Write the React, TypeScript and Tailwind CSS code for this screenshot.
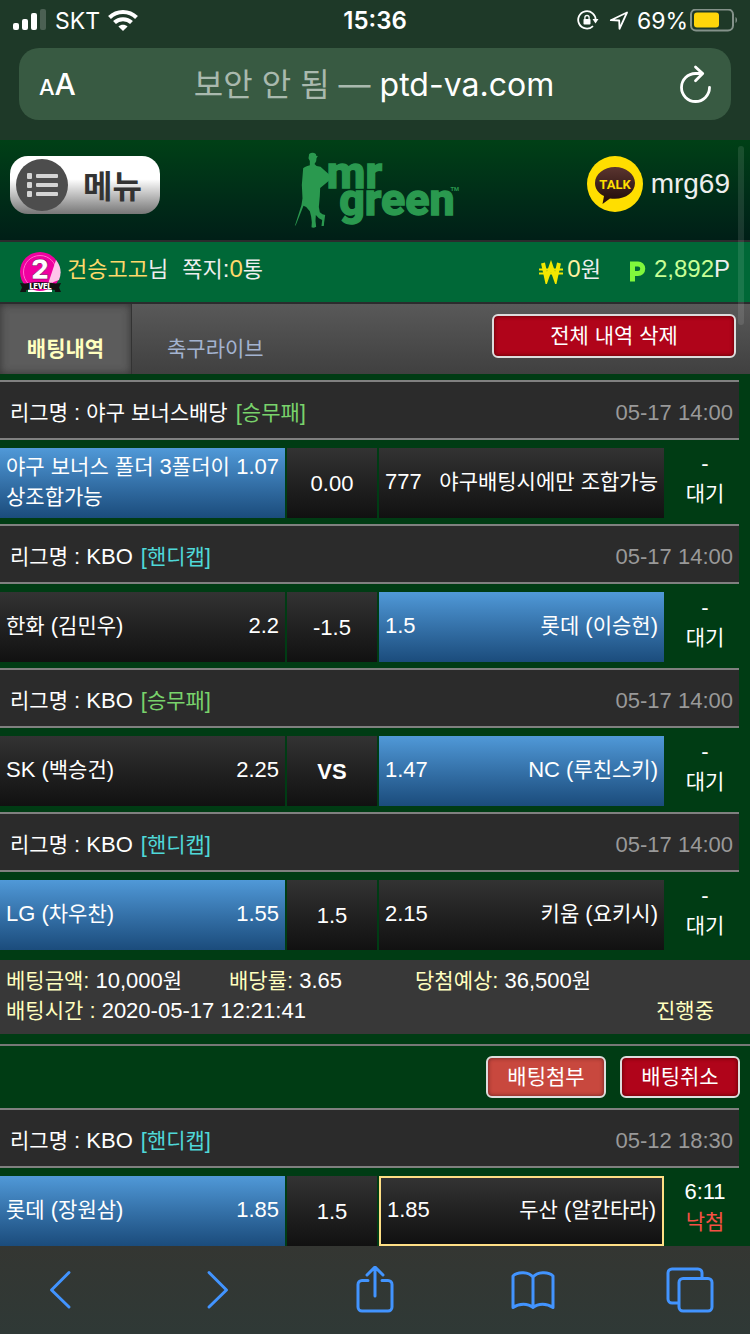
import React from 'react';

type Side = 'home' | 'away';

interface Match {
    league: string;
    kind: 'win' | 'handicap';
    date: string;
    home: string;
    homeOdds: string;
    line: string;
    away: string;
    awayOdds: string;
    pick: Side;
    winner?: Side;
    score: string;
    status: string;
    lost?: boolean;
}

const openMatches: Match[] = [
    { league: '야구 보너스배당', kind: 'win', date: '05-17 14:00', home: '야구 보너스 폴더 3폴더이상조합가능', homeOdds: '1.07', line: '0.00', away: '야구배팅시에만 조합가능', awayOdds: '777', pick: 'home', score: '-', status: '대기' },
    { league: 'KBO', kind: 'handicap', date: '05-17 14:00', home: '한화 (김민우)', homeOdds: '2.2', line: '-1.5', away: '롯데 (이승헌)', awayOdds: '1.5', pick: 'away', score: '-', status: '대기' },
    { league: 'KBO', kind: 'win', date: '05-17 14:00', home: 'SK (백승건)', homeOdds: '2.25', line: 'VS', away: 'NC (루친스키)', awayOdds: '1.47', pick: 'away', score: '-', status: '대기' },
    { league: 'KBO', kind: 'handicap', date: '05-17 14:00', home: 'LG (차우찬)', homeOdds: '1.55', line: '1.5', away: '키움 (요키시)', awayOdds: '2.15', pick: 'home', score: '-', status: '대기' },
];

const closedMatches: Match[] = [
    { league: 'KBO', kind: 'handicap', date: '05-12 18:30', home: '롯데 (장원삼)', homeOdds: '1.85', line: '1.5', away: '두산 (알칸타라)', awayOdds: '1.85', pick: 'home', winner: 'away', score: '6:11', status: '낙첨', lost: true },
];

// Hangul is set one step smaller than the latin text and digits around it
const Mixed: React.FC<{ text: string }> = ({ text }) => (
    <>
        {text.split(/([가-힣]+)/).map((part, i) =>
            i % 2 === 1 ? <span key={i} className="text-[21px]">{part}</span> : part
        )}
    </>
);

const StatusBar: React.FC = () => (
    <div className="grid h-10 grid-cols-[1fr_auto_1fr] items-center px-3 pt-0.5 text-[23px] leading-6">
        <div className="flex items-center gap-2">
            <svg className="h-6 w-[35px]" viewBox="0 0 35 24" fill="currentColor">
                <rect x="1" y="14" width="6" height="7" rx="2" />
                <rect x="10" y="10" width="6" height="11" rx="2" />
                <rect x="19" y="4" width="6" height="17" rx="2" />
                <rect x="28" y="0" width="6" height="21" rx="2" opacity="0.2" />
            </svg>
            <span>SKT</span>
            <svg className="h-6 w-[30px]" viewBox="0 0 30 24" fill="none" stroke="currentColor" strokeWidth="4">
                <path d="M1.500 8.500C9 1 21 1 28.500 8.500" />
                <path d="M6.500 13.500C11 9 19 9 23.500 13.500" />
                <path d="M15 22l-4.600-4.500c2.600-2.400 6.600-2.400 9.200 0z" fill="currentColor" stroke="none" />
            </svg>
        </div>
        <span className="text-2xl font-semibold leading-6">15:36</span>
        <div className="flex items-center justify-end">
            <svg className="mr-2.5 h-6 w-[22px]" viewBox="0 0 22 24" fill="none" stroke="currentColor" strokeWidth="1.800">
                <path d="M18.600 11.500a8.700 8.700 0 1 0-2.600 5.600" />
                <path d="M15.500 10h6l-3 4.500z" fill="currentColor" stroke="none" />
                <rect x="6.500" y="10" width="7" height="5.500" rx="0.800" fill="currentColor" stroke="none" />
                <path d="M7.900 10.500V8.600a2.100 2.100 0 0 1 4.200 0v1.900" strokeWidth="1.300" />
            </svg>
            <svg className="mr-2 h-6 w-5" viewBox="0 0 20 24" fill="none" stroke="currentColor" strokeWidth="1.800" strokeLinejoin="round">
                <path d="M1.800 11.200L18 3.500l-7.500 16.300-.3-8.300z" />
            </svg>
            <span>69%</span>
            <svg className="ml-0.5 h-6 w-12" viewBox="0 0 48 24" fill="none">
                <rect x="1" y="0.500" width="42" height="21" rx="5" stroke="#84928a" strokeWidth="2" />
                <rect x="4" y="3.500" width="25" height="15" rx="3" fill="#ffd60a" />
                <path d="M45.500 8c2 1 2 5 0 6z" fill="#84928a" />
            </svg>
        </div>
    </div>
);

const AddressBar: React.FC = () => (
    <div className="mx-[19px] mt-2 mb-5 flex h-[72px] items-center justify-between rounded-[20px] bg-[#385a42] px-5">
        <button className="w-10 pt-1 text-left leading-9" aria-label="텍스트 크기">
            <span className="text-[22px] font-medium">A</span>
            <span className="text-[30px] font-medium">A</span>
        </button>
        <p className="pt-0.5 pr-2.5 text-[32px] leading-10">
            <span className="text-[#a9b9ae]">보안 안 됨 — </span>ptd-va.com
        </p>
        <button className="w-8" aria-label="새로고침">
            <svg className="h-10 w-8" viewBox="0 0 32 40" fill="none" stroke="currentColor" strokeWidth="2.800" strokeLinecap="round" strokeLinejoin="round">
                <path d="M30.500 23.500a14 14 0 1 1-14-14h6.500" />
                <path d="M16.500 3l7.200 6.600-7.200 7.200" />
            </svg>
        </button>
    </div>
);

const Logo: React.FC = () => (
    <svg className="ml-3 h-20 w-[167px] overflow-visible" viewBox="130 45 500 240" fill="#2a994f" role="img" aria-label="mr green">
        <path d="M176 70L178 57Q188 49 198 57L199 62L204 63L200 70L199 79L194 87L200 93L212 95L222 104L239 119V136L222 150L211 159L210 182L207 216L210 232L218 238L226 240L223 262L222 273H215L217 255L207 250L198 240L197 258L199 275Q192 280 185 277L186 262L184 245L180 229L169 216L161 212L138 270L135 273L155 210L158 190L156 150L160 100Q164 95 180 91V78Z" />
        <g fontFamily="Roboto, sans-serif" fontWeight="800" fontSize="134" stroke="#2a994f" strokeWidth="4">
            <text x="231" y="159">mr</text>
            <text x="268" y="239">green</text>
        </g>
        <text x="602" y="167" fontFamily="Roboto, sans-serif" fontWeight="700" fontSize="17">TM</text>
    </svg>
);

const Header: React.FC = () => (
    <header className="grid h-[102px] grid-cols-[1fr_auto_1fr] items-center border-b-2 border-[#2b2b2d] bg-linear-to-b from-[#004016] to-[#001f17] pr-5 pl-2.5">
        <button className="mb-2.5 flex h-[58px] w-[150px] items-center gap-[15px] rounded-[18px] bg-linear-to-b from-white from-40% to-[#777] pl-1.5 text-[#333]">
            <svg className="h-[52px] w-[52px]" viewBox="0 0 52 52">
                <circle cx="26" cy="26" r="26" fill="#4d4d4d" />
                <g fill="#d4d4d4">
                    <rect x="11" y="14" width="5" height="6" rx="1" />
                    <rect x="20" y="15" width="22" height="4" rx="1" />
                    <rect x="11" y="23" width="5" height="6" rx="1" />
                    <rect x="20" y="24" width="22" height="4" rx="1" />
                    <rect x="11" y="32" width="5" height="6" rx="1" />
                    <rect x="20" y="33" width="22" height="4" rx="1" />
                </g>
            </svg>
            <span className="pt-1 text-[32px] leading-10 font-bold">메뉴</span>
        </button>
        <Logo />
        <div className="mb-3 flex items-center justify-end gap-2">
            <svg className="h-14 w-14" viewBox="0 0 56 56">
                <defs>
                    <linearGradient id="bubble" x1="0" y1="0" x2="0" y2="1">
                        <stop offset="0" stopColor="#5a3530" />
                        <stop offset="1" stopColor="#200a08" />
                    </linearGradient>
                </defs>
                <circle cx="28" cy="28" r="28" fill="#ffde00" />
                <path d="M28 11c-11 0-20 7-20 16 0 6 3.500 10.500 9 13l-1.500 8 7.500-5.600c1.600.300 3.300.400 5 .400 11 0 20-6.800 20-15.800S39 11 28 11z" fill="url(#bubble)" />
                <text x="28" y="32.500" textAnchor="middle" fontFamily="Roboto, sans-serif" fontWeight="700" fontSize="13" fill="#ffde00">TALK</text>
            </svg>
            <span className="text-[28px] leading-8 text-[#eee]">mrg69</span>
        </div>
    </header>
);

const UserBar: React.FC = () => (
    <div className="flex h-[62px] items-center border-b-2 border-[#2b2b2d] bg-[#006837] pr-5 pl-5 text-2xl leading-8 text-[#eee]">
        <svg className="mr-1.5 h-[42px] w-[41px]" viewBox="0 0 41 42">
            <circle cx="20" cy="21" r="20" fill="#f000a0" />
            <circle cx="20" cy="21" r="16.500" fill="none" stroke="#ff6cc8" />
            <path d="M36 9a20 20 0 0 1 3 20l-11 4z" fill="#ffc4ea" />
            <text x="20" y="28" textAnchor="middle" fontFamily="Inter, sans-serif" fontWeight="900" fontSize="27" fill="#fff" stroke="#7a0056" strokeWidth="0.500">2</text>
            <path d="M8 36q12 8 24 0v5H8z" fill="#fff" />
            <path d="M0 32l5 .5q15-3 31 0l5-.5-2 4.500 2 4.500h-6v-2q-14-2-29 0v2H0l2-4.500z" fill="#111" />
            <text x="20.500" y="38" textAnchor="middle" fontFamily="Inter, sans-serif" fontWeight="900" fontSize="7" fill="#fff">LEVEL</text>
        </svg>
        <p className="pb-1.5">
            <span className="text-[22px] text-[#ffd96a]">건승고고</span>
            <span className="text-[22px]">님</span>
        </p>
        <p className="ml-3.5 pb-1.5">
            <span className="text-[22px]">쪽지</span>:<span className="text-[#ffd96a]">0</span>
            <span className="text-[22px]">통</span>
        </p>
        <p className="ml-auto flex items-center gap-1">
            <svg className="h-6 w-6" viewBox="0 0 24 24" fill="none" stroke="#f2e800">
                <path d="M4 3l3.500 16L12 6l4.500 13L20 3" strokeWidth="4" />
                <path d="M0 9.500h24M0 13.500h24" strokeWidth="2" />
            </svg>
            <span className="pb-1.5">
                <span className="text-[#fff3a0]">0</span>
                <span className="text-[22px]">원</span>
            </span>
        </p>
        <p className="ml-7 flex items-center gap-2">
            <svg className="h-6 w-[17px]" viewBox="0 0 17 24" fill="none" stroke="#80f83c" strokeWidth="5">
                <path d="M3.500 21.500V4h5.500a4.500 4.500 0 0 1 0 9.500H4" />
            </svg>
            <span className="pb-1.5">
                <span className="text-[#c8ff96]">2,892</span>P
            </span>
        </p>
    </div>
);

const Tabs: React.FC = () => (
    <nav className="flex h-[70px] items-stretch bg-linear-to-b from-[#595959] to-[#404040] text-[21px] leading-6">
        <a href="#bets" className="w-[132px] border-r border-[#333] bg-[#5c5c5c] pt-[33px] text-center font-bold text-[#ffffbf] shadow-[inset_0_0_8px_#333]">
            배팅내역
        </a>
        <a href="#live" className="px-[35px] pt-[33px] text-[#a3b3d0]">축구라이브</a>
        <button className="mt-2.5 mr-3.5 ml-auto h-11 w-[244px] rounded-md border-2 border-[#ddd] bg-[#b0041a] text-white shadow-[inset_0_0_4px_#500]">
            전체 내역 삭제
        </button>
    </nav>
);

const cellStyle = (match: Match, side: Side) => {
    if (match.pick === side) return 'bg-linear-to-b from-[#5099d8] to-[#1b4c7c] px-1.5';
    if (match.winner === side) return 'bg-linear-to-b from-[#333] to-[#111] border-2 border-[#ffdf85] px-1.5';
    return 'bg-linear-to-b from-[#333] to-[#111] px-1.5';
};

const MatchRow: React.FC<{ match: Match }> = ({ match }) => (
    <li className="pb-1.5">
        <div className="mr-[11px] flex h-[60px] items-center border-y-2 border-[#808080] bg-[#2b2b2b] pt-1.5 pr-1.5 pl-2.5">
            <span><Mixed text={`리그명 : ${match.league}`} /></span>
            <span className={`ml-2 ${match.kind === 'win' ? 'text-[#79d26b]' : 'text-[#4fd8d8]'}`}>
                <Mixed text={match.kind === 'win' ? '[승무패]' : '[핸디캡]'} />
            </span>
            <time className="ml-auto text-[#999]">{match.date}</time>
        </div>
        <div className="mt-2 grid min-h-[70px] grid-cols-[38%_12%_38%_1fr] gap-x-0.5">
            <div className={`flex items-center pb-0.5 ${cellStyle(match, 'home')}`}>
                <div className="flex w-full items-start justify-between gap-1">
                    <span><Mixed text={match.home} /></span>
                    <span>{match.homeOdds}</span>
                </div>
            </div>
            <div className={`flex items-center justify-center bg-linear-to-b from-[#333] to-[#111] pt-0.5 ${match.line === 'VS' ? 'font-bold' : ''}`}>
                {match.line}
            </div>
            <div className={`flex items-center justify-between pb-0.5 ${cellStyle(match, 'away')}`}>
                <span>{match.awayOdds}</span>
                <span className="whitespace-nowrap"><Mixed text={match.away} /></span>
            </div>
            <div className="pt-px pr-1.5 text-center">
                <p>{match.score}</p>
                <p className={match.lost ? 'text-[#f55045]' : ''}><Mixed text={match.status} /></p>
            </div>
        </div>
    </li>
);

const Info: React.FC<{ label: string; value: string }> = ({ label, value }) => (
    <p>
        <span className="text-[#ffffbf]"><Mixed text={label} /></span> <Mixed text={value} />
    </p>
);

const Toolbar: React.FC = () => (
    <nav className="sticky bottom-0 z-10 mt-auto flex h-[88px] items-center justify-between bg-linear-to-b from-[#343632] to-[#2f3936] px-9 text-[#4294ff]">
        <button aria-label="뒤로">
            <svg className="h-12 w-12" viewBox="0 0 48 48" fill="none" stroke="currentColor" strokeWidth="3" strokeLinecap="round" strokeLinejoin="round">
                <path d="M33 6.500L15.500 24 33 41" />
            </svg>
        </button>
        <button aria-label="앞으로">
            <svg className="h-12 w-12" viewBox="0 0 48 48" fill="none" stroke="currentColor" strokeWidth="3" strokeLinecap="round" strokeLinejoin="round">
                <path d="M15 6.500L32.500 24 15 41" />
            </svg>
        </button>
        <button aria-label="공유">
            <svg className="h-12 w-12" viewBox="0 0 48 48" fill="none" stroke="currentColor" strokeWidth="3" strokeLinecap="round" strokeLinejoin="round">
                <path d="M17 14.500h-6a4 4 0 0 0-4 4V41a4 4 0 0 0 4 4h26a4 4 0 0 0 4-4V18.500a4 4 0 0 0-4-4h-6" />
                <path d="M24 30V1M16 9l8-8 8 8" />
            </svg>
        </button>
        <button aria-label="책갈피">
            <svg className="h-12 w-12" viewBox="0 0 48 48" fill="none" stroke="currentColor" strokeWidth="3" strokeLinecap="round" strokeLinejoin="round">
                <path d="M24 41.500V11c-4-5-15-6-20-1v31.500c6-4.500 15-4.500 20 0 5-4.500 14-4.500 20 0V10c-5-5-16-4-20 1" />
            </svg>
        </button>
        <button aria-label="탭">
            <svg className="h-12 w-12" viewBox="0 0 48 48" fill="none" stroke="currentColor" strokeWidth="3" strokeLinejoin="round">
                <path d="M36 12V7a4 4 0 0 0-4-4H6a4 4 0 0 0-4 4v26a4 4 0 0 0 4 4h6" />
                <rect x="13" y="12.500" width="33" height="32.500" rx="4" />
            </svg>
        </button>
    </nav>
);

export default function App() {
    return (
        <div className="relative flex min-h-screen flex-col bg-[#003c14] font-['Liberation_Sans','Noto_Sans_CJK_KR',sans-serif] text-white">
            <div className="bg-[#1e3928] font-[Inter,'Noto_Sans_CJK_KR',sans-serif]">
                <StatusBar />
                <AddressBar />
            </div>
            <Header />
            <UserBar />
            <Tabs />
            <main className="pt-1.5 text-[22px] leading-[30px]">
                <ul>
                    {openMatches.map((match, i) => <MatchRow key={i} match={match} />)}
                </ul>
                <section className="mt-1 bg-[#383838] px-1.5 pt-1.5 pb-2">
                    <div className="grid grid-cols-[223fr_186fr_329fr]">
                        <Info label="베팅금액:" value="10,000원" />
                        <Info label="배당률:" value="3.65" />
                        <Info label="당첨예상:" value="36,500원" />
                    </div>
                    <div className="flex justify-between pr-[30px]">
                        <Info label="배팅시간 :" value="2020-05-17 12:21:41" />
                        <span className="text-[21px] text-[#ffffbf]">진행중</span>
                    </div>
                </section>
                <div className="mt-2.5 flex justify-end gap-3.5 border-t-2 border-[#777] py-2.5 pr-2.5 text-[21px] leading-6">
                    <button className="h-[42px] w-[120px] rounded-md border-2 border-[#ddd] bg-[#c8483e] shadow-[inset_0_0_4px_#622]">배팅첨부</button>
                    <button className="h-[42px] w-[120px] rounded-md border-2 border-[#ddd] bg-[#b0041a] shadow-[inset_0_0_4px_#500]">배팅취소</button>
                </div>
                <ul className="-mb-1.5">
                    {closedMatches.map((match, i) => <MatchRow key={i} match={match} />)}
                </ul>
            </main>
            <Toolbar />
            {/* scroll indicator */}
            <div className="absolute top-[146px] right-1.5 h-[179px] w-1.5 rounded-full bg-white/10" />
        </div>
    );
}
